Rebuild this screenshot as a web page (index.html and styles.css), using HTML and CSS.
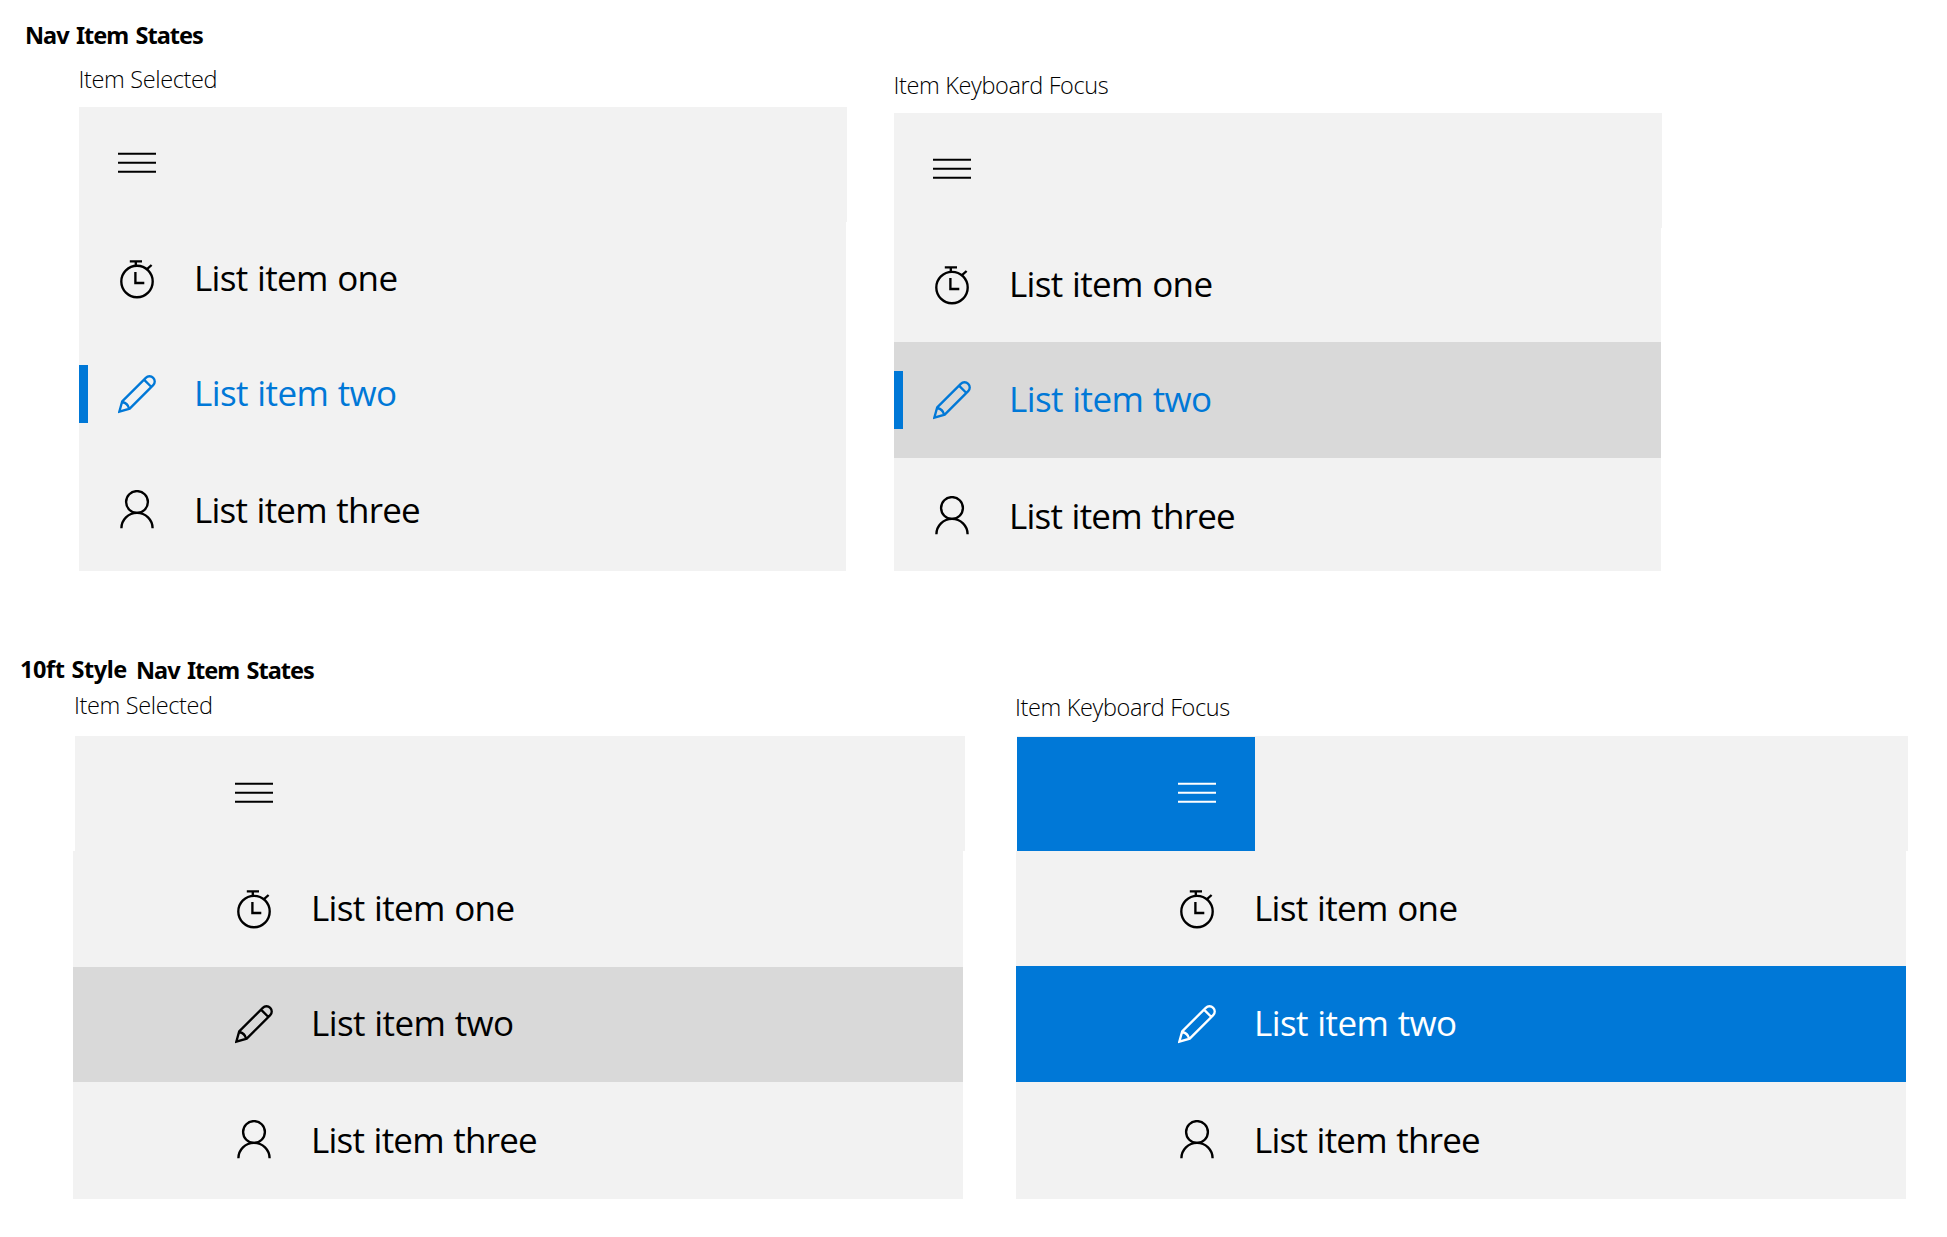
FILE: index.html
```html
<!DOCTYPE html>
<html lang="en">
<head>
<meta charset="utf-8">
<title>Nav Item States</title>
<link rel="stylesheet" href="styles.css">
</head>
<body>
<svg class="sprite" aria-hidden="true">
  <symbol id="menu" viewBox="0 0 38 22"><path d="M0 1.8H38M0 10.8H38M0 19.8H38" stroke-width="2.1"/></symbol>
  <symbol id="watch" viewBox="0 0 38 39"><circle cx="19" cy="21.5" r="15.7"/><path d="M11.8 1.4H24M17.8 1.4V6M29 9.2L33.6 5M17.4 12V23H26.3"/></symbol>
  <symbol id="pencil" viewBox="0 0 38 39"><path d="M1.3 36.7L4.2 26.4L27.8 2.8A5.23 5.23 0 0 1 35.2 10.2L11.7 33.7ZM26 4.6L33.4 12M4.4 27Q9.8 28.4 11 33.4"/></symbol>
  <symbol id="person" viewBox="0 0 38 39"><circle cx="19" cy="12" r="10.9"/><path d="M3.4 38.3A15.6 15.4 0 0 1 34.6 38.3"/></symbol>
</svg>

<section class="group">
  <h1 class="title">Nav Item States</h1>
  <div class="panels">
    <figure class="panel">
      <figcaption class="label">Item Selected</figcaption>
      <div class="pane-head"><svg class="menu"><use href="#menu"/></svg></div>
      <ul class="items">
        <li class="item one"><svg class="icon"><use href="#watch"/></svg><span class="text">List item one</span></li>
        <li class="item two accent marked"><svg class="icon"><use href="#pencil"/></svg><span class="text">List item two</span></li>
        <li class="item three"><svg class="icon"><use href="#person"/></svg><span class="text">List item three</span></li>
      </ul>
    </figure>
    <figure class="panel lowered">
      <figcaption class="label">Item Keyboard Focus</figcaption>
      <div class="pane-head"><svg class="menu"><use href="#menu"/></svg></div>
      <ul class="items">
        <li class="item one"><svg class="icon"><use href="#watch"/></svg><span class="text">List item one</span></li>
        <li class="item two accent marked shaded"><svg class="icon"><use href="#pencil"/></svg><span class="text">List item two</span></li>
        <li class="item three"><svg class="icon"><use href="#person"/></svg><span class="text">List item three</span></li>
      </ul>
    </figure>
  </div>
</section>

<section class="group tenfoot">
  <h1 class="title"><span class="style-name">10ft Style</span><span class="style-states">Nav Item States</span></h1>
  <div class="panels">
    <figure class="panel">
      <figcaption class="label">Item Selected</figcaption>
      <div class="pane-head"><svg class="menu"><use href="#menu"/></svg></div>
      <ul class="items">
        <li class="item one"><svg class="icon"><use href="#watch"/></svg><span class="text">List item one</span></li>
        <li class="item two shaded"><svg class="icon"><use href="#pencil"/></svg><span class="text">List item two</span></li>
        <li class="item three"><svg class="icon"><use href="#person"/></svg><span class="text">List item three</span></li>
      </ul>
    </figure>
    <figure class="panel focused">
      <figcaption class="label">Item Keyboard Focus</figcaption>
      <div class="pane-head"><div class="menu-button"><svg class="menu"><use href="#menu"/></svg></div></div>
      <ul class="items">
        <li class="item one"><svg class="icon"><use href="#watch"/></svg><span class="text">List item one</span></li>
        <li class="item two filled"><svg class="icon"><use href="#pencil"/></svg><span class="text">List item two</span></li>
        <li class="item three"><svg class="icon"><use href="#person"/></svg><span class="text">List item three</span></li>
      </ul>
    </figure>
  </div>
</section>
</body>
</html>
```
FILE: styles.css
```css
* { box-sizing: border-box; }
body {
  margin: 0;
  background: #fff;
  color: #000;
  font-family: "Open Sans", "Noto Sans", sans-serif;
}
.sprite { position: absolute; width: 0; height: 0; }
svg { fill: none; stroke: currentColor; stroke-width: 2.35; flex: none; display: block; }

.group { height: 654px; padding-top: 19px; }
.title {
  margin: 0;
  padding-left: 25px;
  height: 32px;
  font: 700 23.5px/32px "Noto Sans", sans-serif;
  letter-spacing: -1px;
  word-spacing: 2.2px;
  white-space: nowrap;
  display: flex;
}
.panels { display: flex; gap: 47px; padding-left: 79px; }
.panel { margin: 0; width: 768px; padding-top: 12px; }
.lowered { padding-top: 18px; }
.label {
  height: 44px;
  margin-left: -0.5px;
  font-size: 23.5px;
  font-weight: 300;
  letter-spacing: -0.37px;
  line-height: 32px;
  white-space: nowrap;
}
.pane-head { height: 115px; background: #f2f2f2; padding: 45px 0 0 39px; }
.menu { width: 38px; height: 22px; }
.items { list-style: none; margin: 0; padding: 0; width: 767px; background: #f2f2f2; }
.item { display: flex; padding-left: 39px; position: relative; }
.icon { width: 38px; height: 39px; margin-top: 38px; }
.text {
  margin: 31px 0 0 38px;
  height: 50px;
  font-size: 35px;
  line-height: 50px;
  word-spacing: 1px;
  white-space: nowrap;
}
.one { height: 114px; letter-spacing: -0.66px; }
.two { height: 116px; padding-top: 1px; letter-spacing: -0.61px; }
.three { height: 119px; letter-spacing: -0.76px; }
.three .text { margin-top: 33px; }
.lowered .three { height: 113px; }
.accent { color: #0078d7; }
.marked::before {
  content: "";
  position: absolute;
  left: 0;
  top: 29px;
  width: 9px;
  height: 58px;
  background: #0078d7;
}
.shaded { background: #d9d9d9; }
.filled { background: #0078d7; color: #fff; }

.tenfoot { height: 583px; padding-top: 0; }
.tenfoot .title { padding-left: 20px; line-height: 31px; }
.style-name { width: 116px; letter-spacing: -0.45px; word-spacing: 1.5px; }
.style-states { padding-top: 1px; }
.tenfoot .panels { padding-left: 73px; gap: 51px; }
.tenfoot .panel { width: 892px; padding-top: 3px; }
.tenfoot .label { height: 47px; margin-left: 1px; }
.tenfoot .pane-head { margin-left: 2px; width: 890px; padding: 46px 0 0 160px; }
.tenfoot .items { width: 890px; }
.tenfoot .item { padding-left: 162px; }
.tenfoot .one { height: 116px; padding-top: 1px; }
.tenfoot .two { height: 115px; padding-top: 0; }
.tenfoot .three { height: 117px; }
.tenfoot .focused .label { padding-top: 2px; margin-left: -1px; }
.tenfoot .focused .pane-head { margin-left: 1px; width: 891px; padding: 1px 0 0; }
.menu-button { width: 238px; height: 114px; padding: 45px 0 0 161px; background: #0078d7; color: #fff; }
.tenfoot .focused .one { height: 115px; }
.tenfoot .focused .two { height: 116px; padding-top: 1px; }
```
